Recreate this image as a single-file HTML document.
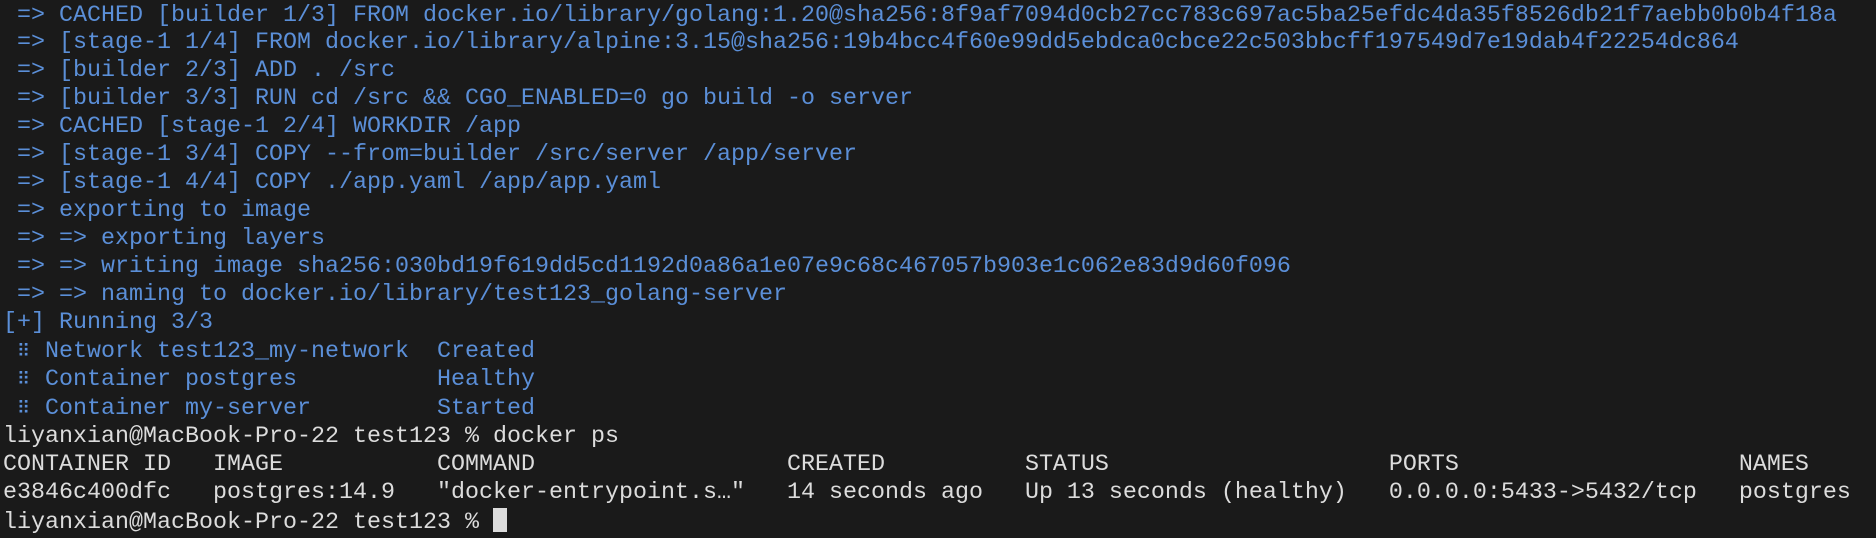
<!DOCTYPE html>
<html><head><meta charset="utf-8"><style>
html,body{margin:0;padding:0;background:#1a1a1a;width:1876px;height:534px;overflow:hidden}
pre{margin:0;position:absolute;left:3px;top:2.5px;font-family:"Liberation Mono","DejaVu Sans Mono",monospace;font-size:23.33px;line-height:27.92px;color:#dcdcdc;white-space:pre}
.b{color:#5b8fd8}
.d{font-family:"DejaVu Sans",monospace;display:inline-block;width:14px;font-size:18px}
.cur{display:inline-block;width:14px;height:24px;background:#dcdcdc;vertical-align:-4px}
</style></head><body><pre><span class="b"> =&gt; CACHED [builder 1/3] FROM docker.io/library/golang:1.20@sha256:8f9af7094d0cb27cc783c697ac5ba25efdc4da35f8526db21f7aebb0b0b4f18a
 =&gt; [stage-1 1/4] FROM docker.io/library/alpine:3.15@sha256:19b4bcc4f60e99dd5ebdca0cbce22c503bbcff197549d7e19dab4f22254dc864
 =&gt; [builder 2/3] ADD . /src
 =&gt; [builder 3/3] RUN cd /src &amp;&amp; CGO_ENABLED=0 go build -o server
 =&gt; CACHED [stage-1 2/4] WORKDIR /app
 =&gt; [stage-1 3/4] COPY --from=builder /src/server /app/server
 =&gt; [stage-1 4/4] COPY ./app.yaml /app/app.yaml
 =&gt; exporting to image
 =&gt; =&gt; exporting layers
 =&gt; =&gt; writing image sha256:030bd19f619dd5cd1192d0a86a1e07e9c68c467057b903e1c062e83d9d60f096
 =&gt; =&gt; naming to docker.io/library/test123_golang-server
[+] Running 3/3
 <span class="d">⠿</span> Network test123_my-network  Created
 <span class="d">⠿</span> Container postgres          Healthy
 <span class="d">⠿</span> Container my-server         Started</span>
liyanxian@MacBook-Pro-22 test123 % docker ps
CONTAINER ID   IMAGE           COMMAND                  CREATED          STATUS                    PORTS                    NAMES
e3846c400dfc   postgres:14.9   "docker-entrypoint.s…"   14 seconds ago   Up 13 seconds (healthy)   0.0.0.0:5433-&gt;5432/tcp   postgres
liyanxian@MacBook-Pro-22 test123 % <span class="cur"></span></pre></body></html>
